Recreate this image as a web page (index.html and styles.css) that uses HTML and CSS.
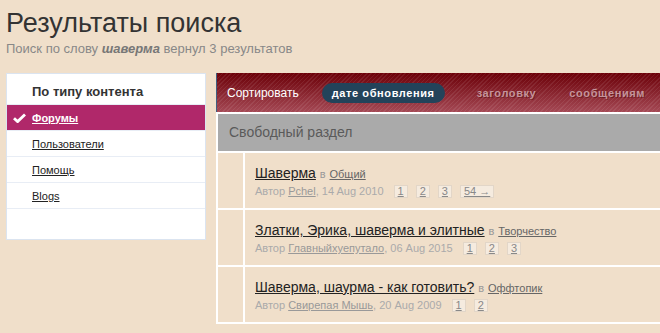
FILE: index.html
```html
<!DOCTYPE html>
<html lang="ru">
<head>
  <meta charset="UTF-8">
  <title>Результаты поиска</title>
  <link rel="stylesheet" href="styles.css">
</head>
<body>

  <h1>Результаты поиска</h1>
  <p class="summary">Поиск по слову <em>шаверма</em> вернул 3 результатов</p>

  <div class="layout">

    <div class="filters">
      <div class="filters-title">По типу контента</div>
      <a class="filter active" href="#">
        <svg class="check" width="13" height="10" viewBox="0 0 13 10">
          <path d="M1 5.2 L4.6 8.6 L12 1.4" fill="none" stroke="#fff" stroke-width="2.8"/>
        </svg>
        <span>Форумы</span>
      </a>
      <a class="filter" href="#"><span>Пользователи</span></a>
      <a class="filter" href="#"><span>Помощь</span></a>
      <a class="filter" href="#"><span>Blogs</span></a>
    </div>

    <div class="main">
      <div class="sortbar">
        <span class="sort-label">Сортировать</span>
        <a class="sort current" href="#">дате обновления</a>
        <a class="sort" href="#">заголовку</a>
        <a class="sort" href="#">сообщениям</a>
      </div>

      <div class="results">
        <div class="category">Свободный раздел</div>

        <div class="topic">
          <div class="topic-icon"></div>
          <div class="topic-body">
            <div class="topic-title"><a href="#">Шаверма</a> <span class="in">в</span> <a class="forum" href="#">Общий</a></div>
            <div class="topic-meta">Автор <a href="#">Pchel</a>, 14 Aug 2010<span class="pages"><a href="#">1</a><a href="#">2</a><a href="#">3</a><a href="#">54 →</a></span></div>
          </div>
        </div>

        <div class="topic">
          <div class="topic-icon"></div>
          <div class="topic-body">
            <div class="topic-title"><a href="#">Златки, Эрика, шаверма и элитные</a> <span class="in">в</span> <a class="forum" href="#">Творчество</a></div>
            <div class="topic-meta">Автор <a href="#">Главныйхуепутало</a>, 06 Aug 2015<span class="pages"><a href="#">1</a><a href="#">2</a><a href="#">3</a></span></div>
          </div>
        </div>

        <div class="topic">
          <div class="topic-icon"></div>
          <div class="topic-body">
            <div class="topic-title"><a href="#">Шаверма, шаурма - как готовить?</a> <span class="in">в</span> <a class="forum" href="#">Оффтопик</a></div>
            <div class="topic-meta">Автор <a href="#">Свирепая Мышь</a>, 20 Aug 2009<span class="pages"><a href="#">1</a><a href="#">2</a></span></div>
          </div>
        </div>
      </div>
    </div>

  </div>

</body>
</html>
```

FILE: styles.css
```css
body {
  background: #f0dfca;
  color: #333;
  font-family: 'Liberation Sans', Arial, sans-serif;
  margin: 0;
  padding: 8px 0 0 6px;
}

h1 {
  font-size: 27px;
  font-weight: normal;
  line-height: 30px;
  margin: 0;
  color: #333;
}

.summary {
  font-size: 13px;
  line-height: 16px;
  color: #888;
  margin: 3px 0 0;
}

.summary em {
  font-weight: bold;
  color: #777;
}

.layout {
  display: flex;
  align-items: flex-start;
  gap: 10px;
  margin-top: 16px;
}

/* left column */
.filters {
  width: 198px;
  background: #fff;
  border: 1px solid #dbe4f0;
  padding-bottom: 30px;
}

.filters-title {
  height: 27px;
  line-height: 30px;
  padding: 3px 0 0 25px;
  font-size: 13px;
  font-weight: bold;
  color: #333;
  border-bottom: 1px solid #e8edf5;
}

.filter {
  display: flex;
  align-items: center;
  height: 25px;
  padding-left: 25px;
  position: relative;
  font-size: 11px;
  color: #222;
  border-bottom: 1px solid #e8edf5;
  text-decoration: none;
}

.filter span {
  text-decoration: underline;
}

.filter.active {
  background: #b0286a;
  color: #fff;
  font-weight: bold;
}

.check {
  position: absolute;
  left: 6px;
  top: 8px;
}

/* right column */
.main {
  flex: 1;
  min-width: 0;
  overflow: hidden;
}

.sortbar {
  height: 39px;
  display: flex;
  align-items: center;
  padding-left: 10px;
  border-left: 1px solid #3f5f80;
  white-space: nowrap;
  background:
    repeating-linear-gradient(-45deg, rgba(255, 255, 255, 0.08) 0 1px, transparent 1px 3px),
    linear-gradient(#6c0008, #a54955);
}

.sort-label {
  color: #fff;
  font-size: 12px;
  margin-right: 23px;
  flex-shrink: 0;
}

.sort {
  flex-shrink: 0;
  font-size: 11px;
  font-weight: bold;
  letter-spacing: 0.6px;
  color: #c4949b;
  text-decoration: none;
  padding: 0 10px;
  height: 20px;
  line-height: 20px;
  margin-right: 13px;
  text-shadow: 1px 1px 0 rgba(60, 0, 0, 0.4);
}

.sort.current {
  background: #23435a;
  color: #fff;
  border-radius: 10px;
  text-shadow: none;
  margin-right: 22px;
}

.results {
  background: #fff;
  border: 2px solid #fff;
  border-right: none;
  display: flex;
  flex-direction: column;
  gap: 2px;
}

.category {
  background: #aaa;
  color: #5a5a5a;
  font-size: 14px;
  height: 37px;
  line-height: 37px;
  padding-left: 11px;
}

.topic {
  display: flex;
  height: 55px;
  background: #f0dfca;
}

.topic-icon {
  width: 25px;
  border-right: 2px solid #fff;
}

.topic-body {
  padding: 11px 0 0 10px;
}

.topic-title {
  font-size: 14px;
  line-height: 18px;
}

.topic-title a {
  color: #222;
}

.topic-title .in {
  font-size: 11px;
  color: #999;
}

.topic-title a.forum {
  font-size: 11px;
  color: #666;
}

.topic-meta {
  font-size: 11px;
  line-height: 16px;
  color: #aaa;
}

.topic-meta a {
  color: #999;
}

.pages {
  margin-left: 2px;
}

.pages a {
  display: inline-block;
  font-size: 11px;
  line-height: 11px;
  padding: 0 3px;
  margin-left: 8px;
  color: #888;
  background: #f5ebdf;
  border: 1px solid #e2d6c8;
}
```
